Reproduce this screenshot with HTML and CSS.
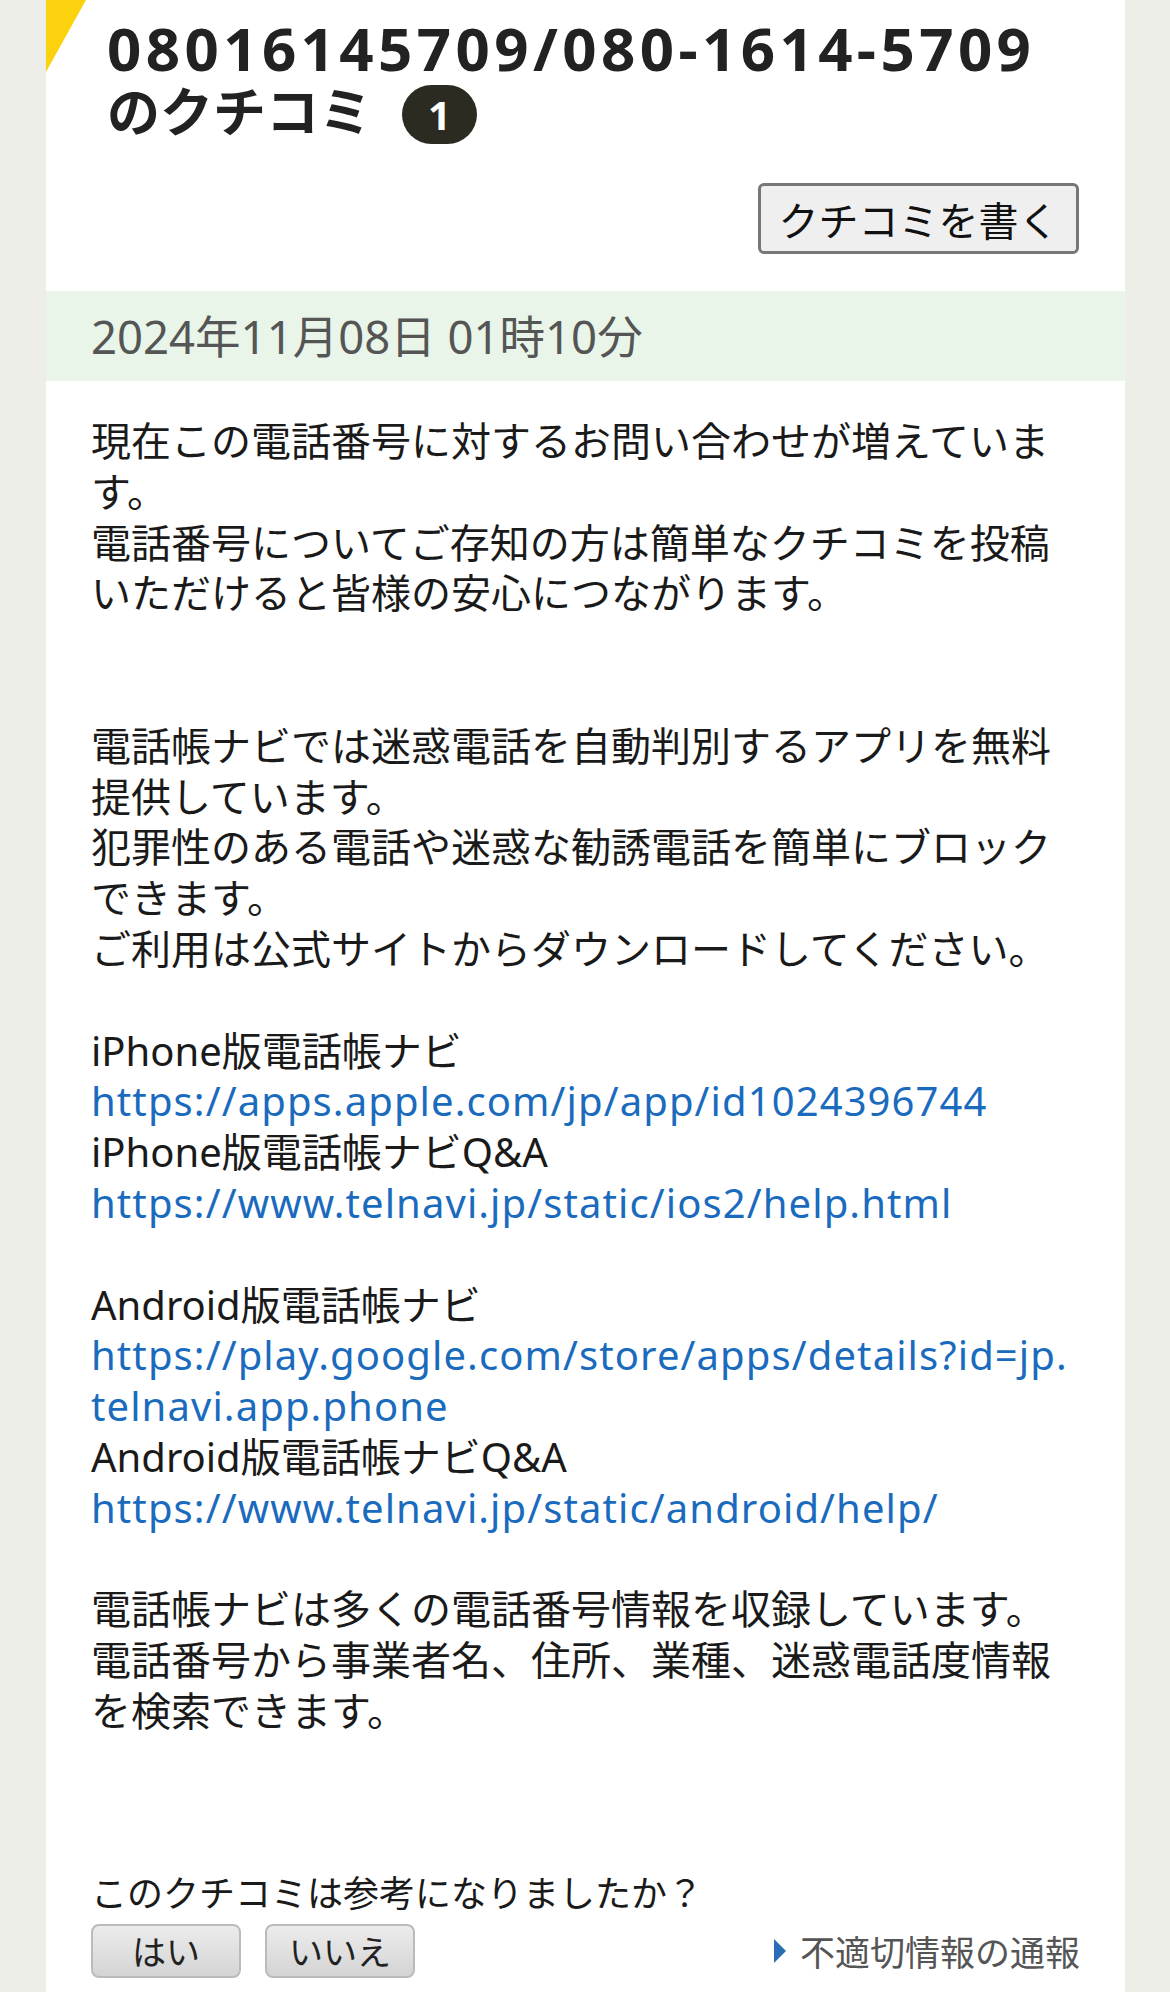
FILE: index.html
```html
<!DOCTYPE html>
<html lang="ja">
<head>
    <meta charset="UTF-8">
    <meta name="viewport" content="width=device-width, initial-scale=1.0">
    <title>08016145709/080-1614-5709のクチコミ</title>
    <link rel="stylesheet" href="styles.css">
</head>
<body>
    <div class="page">
        <div class="card">
            <span class="corner"></span>
            <h1 class="title"><span class="number">08016145709/080-1614-5709</span>のクチコミ<span class="count">1</span></h1>

            <div class="write-row">
                <button class="write-btn">クチコミを書く</button>
            </div>

            <div class="post-date">2024年11月08日 01時10分</div>

            <div class="post-body">
                現在この電話番号に対するお問い合わせが増えています。<br>
                電話番号についてご存知の方は簡単なクチコミを投稿いただけると皆様の安心につながります。<br>
                <br>
                <br>
                電話帳ナビでは迷惑電話を自動判別するアプリを無料提供しています。<br>
                犯罪性のある電話や迷惑な勧誘電話を簡単にブロックできます。<br>
                ご利用は公式サイトからダウンロードしてください。<br>
                <br>
                iPhone版電話帳ナビ<br>
                <a href="#">https://apps.apple.com/jp/app/id1024396744</a><br>
                iPhone版電話帳ナビQ&amp;A<br>
                <a href="#">https://www.telnavi.jp/static/ios2/help.html</a><br>
                <br>
                Android版電話帳ナビ<br>
                <a href="#">https://play.google.com/store/apps/details?id=jp.telnavi.app.phone</a><br>
                Android版電話帳ナビQ&amp;A<br>
                <a href="#">https://www.telnavi.jp/static/android/help/</a><br>
                <br>
                電話帳ナビは多くの電話番号情報を収録しています。<br>
                電話番号から事業者名、住所、業種、迷惑電話度情報を検索できます。
            </div>

            <div class="vote">
                <p class="vote-question">このクチコミは参考になりましたか？</p>
                <div class="vote-row">
                    <div class="vote-buttons">
                        <button class="vote-btn">はい</button>
                        <button class="vote-btn">いいえ</button>
                    </div>
                    <a class="report" href="#"><span class="report-arrow"></span>不適切情報の通報</a>
                </div>
            </div>
        </div>
    </div>
</body>
</html>
```

FILE: styles.css
```css
body {
    margin: 0;
    padding: 0;
    background-color: #eeeee8;
    color: #1a1a1a;
    font-family: "Noto Sans", "Noto Sans CJK JP", sans-serif;
}

.page {
    padding: 0 45px 0 46px;
}

.card {
    position: relative;
    background-color: white;
    min-height: 1992px;
}

/* yellow mark in the top left corner */
.corner {
    position: absolute;
    left: 0;
    top: 0;
    width: 40px;
    height: 72px;
    background-color: #fcd20f;
    clip-path: polygon(0 0, 100% 0, 0 100%);
}

.title {
    margin: 0;
    padding: 16px 45px 0 61px;
    font-size: 53px;
    line-height: 64px;
    font-weight: 700;
    color: #222;
}

.number {
    display: block;
    white-space: nowrap;
    font-size: 60px;
    line-height: 64px;
    letter-spacing: 4.4px;
}

.count {
    display: inline-block;
    width: 75px;
    height: 59px;
    margin-left: 30px;
    border-radius: 30px;
    background-color: #2b2b22;
    color: white;
    font-size: 40px;
    line-height: 59px;
    text-align: center;
    vertical-align: 2px;
}

.write-row {
    display: flex;
    justify-content: flex-end;
    padding: 0 46px 0 45px;
    margin-top: 39px;
}

.write-btn {
    width: 321px;
    height: 71px;
    padding: 0;
    font-family: "Noto Sans CJK JP", sans-serif;
    font-size: 40px;
    color: #111;
    background-color: #efefef;
    border: 3px solid #777;
    border-radius: 6px;
}

.post-date {
    margin-top: 37px;
    height: 90px;
    padding-left: 45px;
    background-color: #e8f5e8;
    color: #555;
    font-size: 45.5px;
    line-height: 90px;
}

.post-body {
    padding: 35px 45px 0;
    font-size: 40px;
    line-height: 50.8px;
}

.post-body a {
    color: #1a6bbd;
    text-decoration: none;
    letter-spacing: 1.1px;
    word-break: break-all;
}

.vote {
    padding: 134px 45px 0;
}

.vote-question {
    margin: 0;
    font-size: 36px;
    line-height: 46px;
}

.vote-row {
    display: flex;
    justify-content: space-between;
    align-items: center;
    margin-top: 7px;
}

.vote-buttons {
    display: flex;
    gap: 24px;
}

.vote-btn {
    width: 150px;
    height: 54px;
    padding: 0;
    font-family: "Noto Sans CJK JP", sans-serif;
    font-size: 34px;
    color: #222;
    background: linear-gradient(#ececec, #d4d4d4);
    border: 2px solid #bbb;
    border-radius: 8px;
}

.report {
    display: flex;
    align-items: center;
    font-size: 35px;
    color: #555;
    text-decoration: none;
}

.report-arrow {
    width: 0;
    height: 0;
    margin-right: 14px;
    border-top: 12px solid transparent;
    border-bottom: 12px solid transparent;
    border-left: 12px solid #2a6cb6;
}
```
